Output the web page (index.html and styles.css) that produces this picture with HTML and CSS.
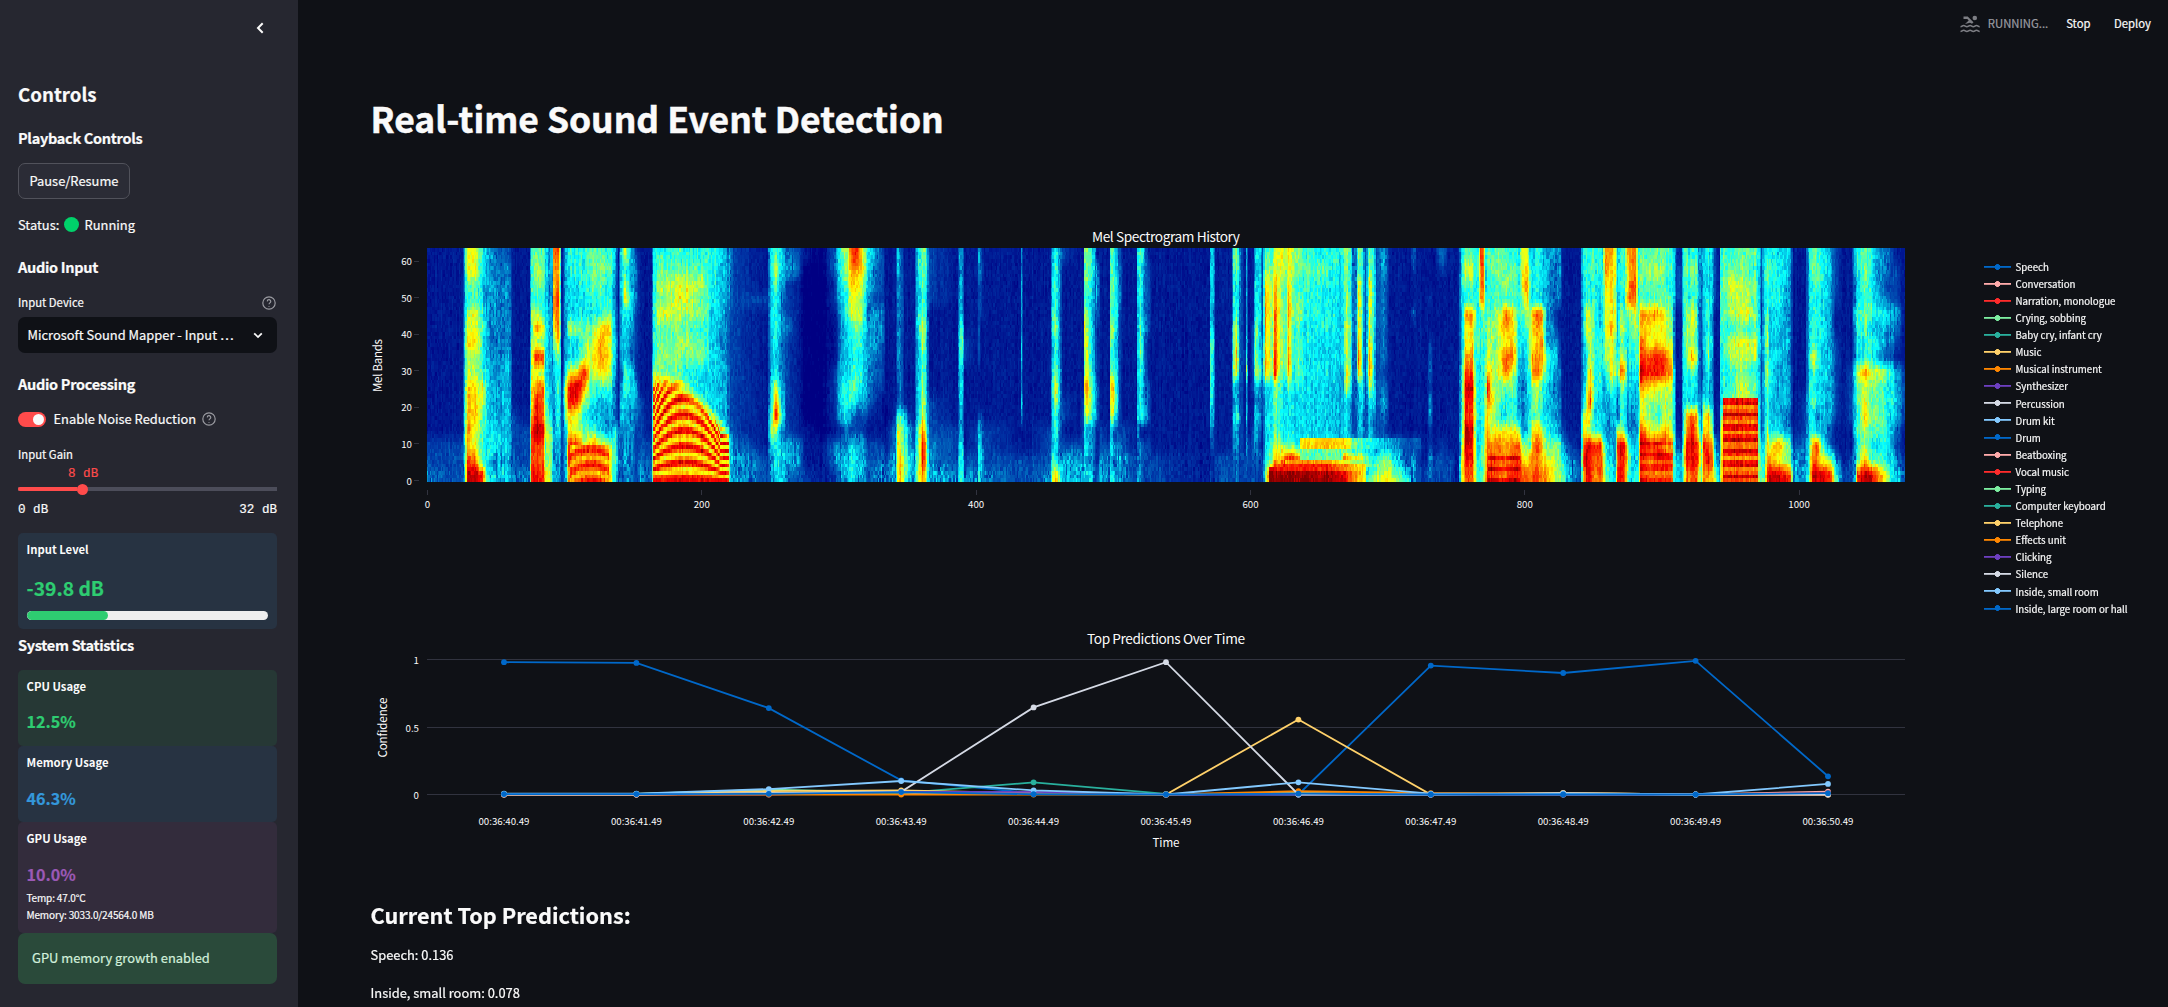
FILE: index.html
```html
<!DOCTYPE html>
<html lang="en">
<head>
<meta charset="utf-8">
<title>Real-time Sound Event Detection</title>
<link rel="stylesheet" href="styles.css">
</head>
<body>
<div class="app">
  <aside class="sidebar">
    <header class="sidebar-head">
      <svg class="collapse" viewBox="0 0 8 12"><path d="M6.7 1.3 2 6l4.7 4.7"/></svg>
    </header>
    <h2 class="side-title">Controls</h2>
    <h3 class="side-heading">Playback Controls</h3>
    <button class="btn">Pause/Resume</button>
    <p class="status">Status: <span class="dot"></span> Running</p>
    <h3 class="side-heading audio-input">Audio Input</h3>
    <div class="field-label"><span>Input Device</span>
      <svg class="help" viewBox="0 0 24 24"><circle cx="12" cy="12" r="10.6"/><path d="M9 9.2a3 3 0 0 1 6 .3c0 2-3 2.600-3 4.500"/><path d="M12 17v1.400"/></svg>
    </div>
    <div class="select"><span>Microsoft Sound Mapper - Input …</span>
      <svg viewBox="0 0 10 7"><path d="M1.200 1.300 5 5.100l3.800-3.800"/></svg>
    </div>
    <h3 class="side-heading audio-proc">Audio Processing</h3>
    <div class="toggle-row"><span class="toggle"><span class="knob"></span></span><span class="toggle-text">Enable Noise Reduction</span>
      <svg class="help" viewBox="0 0 24 24"><circle cx="12" cy="12" r="10.6"/><path d="M9 9.2a3 3 0 0 1 6 .3c0 2-3 2.600-3 4.500"/><path d="M12 17v1.400"/></svg>
    </div>
    <div class="field-label gain-label"><span>Input Gain</span></div>
    <div class="gain-value">8 dB</div>
    <div class="slider"><span class="slider-fill"></span><span class="slider-thumb"></span></div>
    <div class="slider-range"><span>0 dB</span><span>32 dB</span></div>
    <section class="card level">
      <h4>Input Level</h4>
      <div class="big">-39.8 dB</div>
      <div class="meter"><div class="meter-fill" style="width:33.7%"></div></div>
    </section>
    <h3 class="side-heading stats">System Statistics</h3>
    <section class="card cpu"><h4>CPU Usage</h4><div class="value">12.5%</div></section>
    <section class="card memory"><h4>Memory Usage</h4><div class="value">46.3%</div></section>
    <section class="card gpu"><h4>GPU Usage</h4><div class="value">10.0%</div>
      <p>Temp: 47.0°C</p><p>Memory: 3033.0/24564.0 MB</p></section>
    <div class="success">GPU memory growth enabled</div>
  </aside>
  <main class="main">
    <header class="topbar">
      <svg class="swimmer" viewBox="0 0 20 18"><circle cx="14.800" cy="3" r="2.300"/><path d="M3.500 1.600h4.200l5.800 5.600-1.500 1.500-2-.9-5 1.300 3.700-3.600-1.400-1.600H3.500z"/><path class="wave" d="M.5 11.700c1.600 0 1.600-1.200 3.200-1.200s1.600 1.200 3.200 1.200 1.600-1.200 3.200-1.200 1.600 1.200 3.200 1.200 1.600-1.200 3.200-1.200 1.600 1.200 3.200 1.200M.5 16.500c1.600 0 1.600-1.200 3.200-1.200s1.600 1.200 3.200 1.200 1.600-1.200 3.200-1.200 1.600 1.200 3.200 1.200 1.600-1.200 3.200-1.200 1.600 1.200 3.200 1.200"/></svg>
      <span class="running">RUNNING...</span>
      <span class="stop">Stop</span>
      <span class="deploy">Deploy</span>
    </header>
    <h1>Real-time Sound Event Detection</h1>
    <div class="figure">
      <div class="plots">
        <svg class="axes" width="1560" height="670" viewBox="370 190 1560 670">
          <g class="ticks" id="ticks"></g>
          <g class="axis-text" id="axis-text"></g>
          <text class="plot-title" x="1166" y="242" textLength="148">Mel Spectrogram History</text>
          <text class="plot-title" x="1166" y="643.500" textLength="158">Top Predictions Over Time</text>
          <text class="axis-title" transform="translate(382 365.500) rotate(-90)" textLength="53">Mel Bands</text>
          <text class="axis-title" transform="translate(387 727.500) rotate(-90)" textLength="60">Confidence</text>
          <text class="axis-title" x="1166" y="847" textLength="27">Time</text>
          <g id="traces"></g>
        </svg>
        <canvas class="spectrogram" id="spectrogram" width="1078" height="64"></canvas>
      </div>
      <ul class="legend">
        <li class="c0"><span>Speech</span></li>
        <li class="c1"><span>Conversation</span></li>
        <li class="c2"><span>Narration, monologue</span></li>
        <li class="c3"><span>Crying, sobbing</span></li>
        <li class="c4"><span>Baby cry, infant cry</span></li>
        <li class="c5"><span>Music</span></li>
        <li class="c6"><span>Musical instrument</span></li>
        <li class="c7"><span>Synthesizer</span></li>
        <li class="c8"><span>Percussion</span></li>
        <li class="c9"><span>Drum kit</span></li>
        <li class="c0"><span>Drum</span></li>
        <li class="c1"><span>Beatboxing</span></li>
        <li class="c2"><span>Vocal music</span></li>
        <li class="c3"><span>Typing</span></li>
        <li class="c4"><span>Computer keyboard</span></li>
        <li class="c5"><span>Telephone</span></li>
        <li class="c6"><span>Effects unit</span></li>
        <li class="c7"><span>Clicking</span></li>
        <li class="c8"><span>Silence</span></li>
        <li class="c9"><span>Inside, small room</span></li>
        <li class="c0"><span>Inside, large room or hall</span></li>
      </ul>
    </div>
    <h2 class="pred-title">Current Top Predictions:</h2>
    <p class="pred">Speech: 0.136</p>
    <p class="pred">Inside, small room: 0.078</p>
  </main>
</div>
<script src="charts.js"></script>
</body>
</html>
```
FILE: styles.css
```css
* { box-sizing: border-box; }
body {
  margin: 0;
  background: #0f1116;
  color: #fafafa;
  font-family: "Noto Sans CJK SC", "Noto Sans", sans-serif;
  font-size: 12.9px;
  line-height: 20px;
  -webkit-text-stroke: .2px;
}
h1, h2, h3, h4, p, ul { margin: 0; padding: 0; }
.app { display: flex; width: 2168px; height: 1007px; overflow: hidden; }

/* Sidebar */
.sidebar {
  width: 298px;
  flex: none;
  background: #262730;
  padding: 0 21px 0 18px;
  display: flex;
  flex-direction: column;
}
.sidebar > * { flex: none; }
.sidebar-head { height: 81px; padding: 22px 13px 0 0; display: flex; justify-content: flex-end; }
.collapse { width: 8px; height: 12px; fill: none; stroke: #fafafa; stroke-width: 2; }
.side-title { font-size: 18.700px; line-height: 26px; height: 26px; font-weight: 700; }
.side-heading { font-size: 14.500px; line-height: 20px; height: 20px; font-weight: 700; margin-top: 21px; letter-spacing: -.3px; }
.btn {
  align-self: flex-start;
  width: 112px;
  height: 36px;
  margin-top: 15px;
  padding: 0;
  border: 1px solid #51525b;
  border-radius: 7px;
  background: #2b2c36;
  color: #fafafa;
  font: inherit;
}
.status { margin-top: 16px; height: 20px; display: flex; align-items: center; white-space: pre; }
.dot { width: 15px; height: 15px; border-radius: 50%; background: #00d26a; margin: 0 2.500px 1px 2px; }
.audio-input { margin-top: 22px; }
.field-label { margin-top: 17px; height: 16px; line-height: 18px; font-size: 11.300px; display: flex; justify-content: space-between; align-items: center; }
.help { width: 14px; height: 14px; fill: none; stroke: #9b9ca2; stroke-width: 2; }
.field-label .help { margin: 2px 1px 0 0; }
.select {
  margin-top: 7px;
  height: 36px;
  border-radius: 7px;
  background: #0f1116;
  padding: 0 14px 0 9.500px;
  display: flex;
  align-items: center;
  justify-content: space-between;
}
.select svg { width: 10px; height: 7px; fill: none; stroke: #fafafa; stroke-width: 1.800; }
.toggle-row { margin-top: 15px; height: 20px; display: flex; align-items: center; }
.toggle { width: 28px; height: 15px; border-radius: 8px; background: #ff4b4b; padding: 2px; display: flex; justify-content: flex-end; }
.knob { width: 11px; height: 11px; border-radius: 50%; background: #fafafa; }
.toggle-text { margin: 0 6px 0 7.500px; }
.gain-value, .slider-range { font: 12.600px/16px "Liberation Mono", monospace; }
.gain-value { margin: 4px 0 0 50px; color: #ff4b4b; height: 16px; }
.slider { margin-top: 1px; height: 12px; display: flex; align-items: center; background: linear-gradient(#4c4d5a, #4c4d5a) center / 100% 4px no-repeat; }
.slider-fill { width: 59px; height: 4px; border-radius: 2px 0 0 2px; background: #ff4b4b; }
.slider-thumb { width: 11px; height: 11px; border-radius: 50%; background: #ff4b4b; }
.slider-range { margin-top: 7px; height: 16px; display: flex; justify-content: space-between; }
.card { border-radius: 5px; padding: 7px 9px 0 8.500px; }
.card h4 { font-size: 11.300px; line-height: 18px; height: 18px; font-weight: 700; -webkit-text-stroke: 0; }
.level { height: 96px; margin-top: 15px; background: #273342; }
.big { margin-top: 15px; height: 30px; line-height: 30px; font-size: 19.300px; font-weight: 700; color: #2ecc71; }
.meter { margin-top: 8px; height: 9px; border-radius: 5px; background: #eee; overflow: hidden; }
.meter-fill { height: 9px; border-radius: 5px; background: #2ecc71; }
.stats { margin-top: 6px; margin-bottom: 15px; }
.value { margin-top: 15px; height: 24px; line-height: 24px; font-size: 16.100px; font-weight: 700; }
.cpu { height: 76px; background: #263835; }
.cpu .value { color: #2ecc71; margin-top: 14px; }
.memory { height: 76px; background: #273342; }
.memory .value { color: #3498db; }
.gpu { height: 111px; background: #332c3c; }
.gpu .value { color: #9b59b6; margin-bottom: 3px; }
.gpu p { font-size: 10px; line-height: 17px; height: 17px; letter-spacing: -.15px; }
.success { height: 51px; border-radius: 7px; background: #2a4a3a; padding: 0 14px; line-height: 50px; color: #d2f0dc; }

/* Main column */
.main { width: 1870px; padding-left: 72.500px; }
.topbar { height: 48px; padding-right: 17px; display: flex; align-items: center; justify-content: flex-end; font-size: 11.300px; }
.swimmer { width: 20px; height: 18px; fill: #7d7e84; }
.swimmer .wave { fill: none; stroke: #7d7e84; stroke-width: 1.500; }
.topbar span { line-height: 18px; margin-bottom: 2px; }
.topbar .running { color: #9a9ba1; margin: 0 18px 2px 8px; }
.topbar .stop { margin-right: 23.500px; }
h1 { margin-top: 46px; height: 48px; line-height: 48px; font-size: 35.400px; font-weight: 700; white-space: nowrap; -webkit-text-stroke: .5px; }
.figure { margin: 48px 0 0 -.5px; height: 670px; display: flex; }
.plots { width: 1560px; height: 670px; display: grid; }
.axes, .spectrogram { grid-area: 1 / 1; }
.spectrogram { width: 1478px; height: 234px; margin: 58px 0 0 57px; image-rendering: pixelated; }
.axes text { fill: #fafafa; text-anchor: middle; }
.axes .plot-title { font-size: 13.700px; }
.axes .axis-title { font-size: 11.600px; }
.axes .axis-text text { font-size: 9.700px; }
.axes .axis-text .end { text-anchor: end; }
.ticks line { stroke: #31333f; stroke-width: 1; }
.legend { list-style: none; margin: 68px 0 0 54px; font-size: 9.700px; color: #fafafa; }
.legend li { height: 17.100px; line-height: 17px; display: flex; align-items: center; white-space: nowrap; }
.legend span { padding-top: 1.500px; }
.legend li::before {
  content: "";
  width: 27px;
  height: 6px;
  margin-right: 4.500px;
  background:
    radial-gradient(circle at 50% 50%, currentColor 2.600px, transparent 3.100px),
    linear-gradient(currentColor, currentColor) center / 100% 1.800px no-repeat;
  color: var(--c);
}
.c0 { --c: #0068c9; }
.c1 { --c: #ffabab; }
.c2 { --c: #ff2b2b; }
.c3 { --c: #7defa1; }
.c4 { --c: #29b09d; }
.c5 { --c: #ffd16a; }
.c6 { --c: #ff8700; }
.c7 { --c: #6d3fc0; }
.c8 { --c: #d5dae5; }
.c9 { --c: #83c9ff; }
#traces { stroke: none; }
#traces polyline { fill: none; stroke: var(--c); stroke-width: 1.800; }
#traces circle { fill: var(--c); }
.pred-title { margin-top: 38px; height: 34px; line-height: 33px; font-size: 21.700px; font-weight: 700; }
.pred { margin-top: 13px; height: 20px; }
.pred + .pred { margin-top: 18px; }
```
FILE: charts.js
```js
const NS = 'http://www.w3.org/2000/svg';
function add(parent, tag, attrs, text) {
  const el = document.createElementNS(NS, tag);
  for (const k in attrs) el.setAttribute(k, attrs[k]);
  if (text !== undefined) el.textContent = text;
  parent.appendChild(el);
  return el;
}
const ticks = document.getElementById('ticks');
const labels = document.getElementById('axis-text');
const traces = document.getElementById('traces');

// Spectrogram axes
for (let b = 0; b <= 60; b += 10) {
  const y = 480.5 - b * 3.656;
  add(ticks, 'line', { x1: 414, x2: 419, y1: Math.floor(y) + .5, y2: Math.floor(y) + .5 });
  add(labels, 'text', { x: 412, y: y + 4, class: 'end' }, b);
}
for (let c = 0; c <= 1000; c += 200) {
  const x = 427.5 + c * 1.3716;
  add(ticks, 'line', { x1: Math.floor(x) + .5, x2: Math.floor(x) + .5, y1: 490, y2: 495 });
  add(labels, 'text', { x: x, y: 508 }, c);
}

// Prediction lines
[[1, 659.5], [0.5, 727.5], [0, 794.5]].forEach(([v, y]) => {
  add(ticks, 'line', { x1: 427, x2: 1905, y1: y, y2: y });
  add(labels, 'text', { x: 419, y: y + 4, class: 'end' }, v);
});
const X = i => 504 + 132.4 * i;
for (let i = 0; i <= 10; i++) {
  add(labels, 'text', { x: X(i), y: 825, textLength: 51 }, '00:36:' + (40 + i) + '.49');
}
const series = [
  [0, [.98, .975, .64, .105, .01, 0, 0, .955, .9, .99, .135]],
  [1, [0, 0, .01, .01, .01, 0, .01, 0, .01, 0, .022]],
  [2, [0, 0, .01, .02, .01, 0, .01, 0, 0, 0, .01]],
  [3, [.005, .005, .035, .015, .01, 0, .01, 0, .01, 0, 0]],
  [4, [0, 0, .01, .01, .09, .005, 0, 0, 0, 0, 0]],
  [5, [.005, .005, .025, .03, .01, 0, .555, 0, 0, 0, 0]],
  [7, [0, 0, 0, .02, .02, 0, 0, 0, 0, 0, 0]],
  [6, [0, 0, 0, 0, 0, 0, .025, .01, .01, 0, 0]],
  [8, [0, 0, .01, .02, .645, .98, 0, 0, .01, 0, 0]],
  [9, [.006, .006, .04, .1, .03, 0, .09, .006, .006, 0, .078]],
  [0, [.003, .003, .005, .018, .002, 0, .006, 0, 0, 0, .01]]
];
for (const [c, values] of series) {
  const g = add(traces, 'g', { class: 'c' + c });
  const Y = v => 794.5 - v * 135;
  add(g, 'polyline', { points: values.map((v, i) => X(i) + ',' + Y(v)).join(' ') });
  values.forEach((v, i) => add(g, 'circle', { cx: X(i), cy: Y(v), r: 2.9 }));
}

// Spectrogram frames: [frame, energy per 4-band group from the top band down, hex]
const frames = `0 1111111111111223
25 1111111111111222
27 4433444444555554
29 997689a88aaabace
34 997699a88aaa99ce
38 776677877899877d
40 665567666a97777d
43 4433444455555556
46 3344333344445645
60 2333333444444444
62 1111111111122223
74 1111111111112223
76 777687898aabdccd
79 78868b8d9bddedcd
84 78767a7d8ccceccd
86 5554566556679779
89 3433444445567889
91 5433444444456665
92 cbabba8654444444
95 cbbccba766665444
97 7666676655544433
98 1111111112222222
101 4444444469974444
103 665558559dda9ddb
109 66555855aed99ddc
114 66655778db8679cb
120 7776578986647bdd
126 78766abba64459cd
132 67667b9a975448bb
135 6655667765444777
137 4433445543336776
139 1111111111113333
142 7665655534553333
144 968a655477544443
149 4445443355434333
152 2333222224432222
155 1111111111222233
163 1111111111111223
165 66666666889bbccb
169 678797788abccccc
175 678897787abbbbbb
187 67998787679aaaab
200 678786785567aaab
207 6666565555568aab
212 65555445545569bb
218 44443333444448ba
221 3333222222223555
223 2222222222222344
248 1112111111111122
250 5544544434568533
254 7976666569bd8665
258 5543343334573455
262 3422232222222443
271 2211111111111332
275 1000000000001112
288 0000000000000111
298 3322111122221332
301 6654433345541343
306 8876655556653344
309 cba9966567632566
313 dba9987677522454
317 9a87865555422444
321 6654344444321232
325 4332444332211223
332 2222333222111233
334 1111111111101123
341 1111111111123344
343 4433333332268999
345 33334333333799bb
348 1111111111146677
351 1111111111124465
355 1111111111112233
358 6655665555567889
361 777679877889bddb
363 7766676666779bb9
366 2222111111222334
386 1111111111112223
388 4344456655534566
390 4344477655434566
392 1111112211111123
401 1111111111112223
402 3322222211124555
404 2322211111124565
406 1111111111112223
432 1111111111111122
433 3344434433531122
435 1111111111111122
454 1111111111112223
456 5566775567665579
458 666668667986655a
461 4444344455543338
463 2111111111221244
475 1111111111111244
478 1111111111222234
479 777689877a865555
481 877678989ba84545
484 6665565567874435
487 3323222234442222
488 1444322223331112
491 1111111111112234
497 1111111111111233
498 6667787679974546
500 777768667ba83435
502 5566665566752334
505 2333222222222343
508 1111111111112233
517 1111111111111122
518 6655555555553334
520 7666677766661333
523 4333343333461222
526 1222221112221222
529 1111111111111122
570 1111111111111111
571 4444456676643212
573 4545346555442211
575 1111111111111122
586 1111111111111122
588 7655577785354322
590 876679aba4574433
592 4544334432242222
594 2222222222222222
596 1111111211111122
597 4444445694463432
599 1111111111111222
602 1111122222112222
604 5466678895464422
607 6555655684343232
609 2222223333221122
611 78abbbabb5555567
616 677877777555567f
618 99bbcccdd88779bf
622 99888888766668af
626 88777777755557df
628 a9abbaabb75557de
631 88778666655557de
635 87678777765555ce
640 67666565555556cd
651 67666655655556de
668 65555555444444cc
670 88788998a95555bb
673 76676877865445ba
675 33333333332224aa
677 33333333333224aa
679 87aaaabcb54445aa
682 66666666665444a9
684 2222222222222488
687 779999abb8544566
690 6666666666533466
692 2222222222222267
698 4433333323432488
702 1111111111111378
706 1111111111111357
717 1111111111111222
719 3211311111111244
721 1111111111111222
729 1111111111111112
731 1112112332442243
734 1111111111111122
740 3211111111111222
745 1111111111111122
752 1111111111111111
754 5555444455556789
757 7976b99bceddeedc
762 7976baabcedceddc
764 6666876778898999
766 6766568666665567
768 cbbb666655555556
770 cccb876666666777
772 656677778889aaab
773 76667889adbabccd
776 6766678799a88bdd
779 787798788888acdd
783 77768a9a97659bcc
786 7787cb9cc765abcc
791 6776aaac97669bdd
796 6666666554448cdd
799 99a87655433348ac
802 9aba87655444489c
804 57778888766677bb
806 5555ba9bb8779bbc
810 6665cbabc877acbc
813 5554babb96658aab
816 444444476545679b
822 4333234543445899
826 3333112232333778
828 1111111111112357
833 1111111111111234
841 1111111111111122
843 665555444458abda
845 66669975678a9ded
848 67669999bbd98ede
851 6666666666556ccb
855 6655556666556dcc
857 55555555444449bb
859 bba9998864443677
863 baaa9b9997444456
866 9988897786543334
868 5555555674339dcd
870 66668979c7668edd
873 66657768b7656dcc
875 b99b765554434898
878 bbcc876655433555
881 bbcb987654433445
883 6666777765555666
885 7776bacceb99cedd
891 7877ba9cda889dcc
898 7877b9add9869ddc
903 7777999cc989bcdc
908 66566789b8778bcb
909 4444333355555666
911 2222111111111355
914 1222111111111244
916 6666566655556777
918 67667777655aaddb
922 6876998b755cdedc
925 67767779655bbddc
927 4444333433478cc9
929 4333222222334677
931 555555544469adcb
934 66567678655baceb
937 4444334333467bca
939 2222111111111458
942 1111111111111235
943 6667666555557788
945 777676666669cccc
950 67988698667ccccc
960 77889798799dcccc
968 76878698677ccccc
971 5555556555566788
973 2222113222222466
975 5655556555445567
977 6876779798778abd
979 67665556665569be
985 5666554544445b9e
991 554444544443488d
994 433333323332377c
996 1111111111111244
1005 1111111111222333
1008 6555555656655777
1010 7766666966756abe
1013 7776666865635dce
1016 666566555554489e
1021 555544445444338d
1024 343333343443227c
1027 2222112222221146
1032 1111111111111112
1038 1111111122221122
1041 5433533365545344
1043 665576659776767d
1048 77767766b89a88ae
1053 666675669878767e
1058 434464549777757b
1064 3323543286666659
1068 2222433265654455
1071 1222432144543234
1077 1111111122221123`.split('\n').map(l => {
  const [f, p] = l.split(' ');
  return [+f, [...p].map(h => parseInt(h, 16) / 15)];
});

// Plotly "Jet" colour scale
const jet = [[0, 0, 0, 131], [.125, 0, 60, 170], [.375, 5, 255, 255], [.625, 255, 255, 0], [.875, 250, 0, 0], [1, 128, 0, 0]];
function colour(v) {
  v = Math.max(0, Math.min(1, v));
  let i = 1;
  while (v > jet[i][0]) i++;
  const a = jet[i - 1], b = jet[i], t = (v - a[0]) / (b[0] - a[0]);
  return [1, 2, 3].map(k => a[k] + (b[k] - a[k]) * t);
}
let seed = 7;
const rand = () => (seed = (seed * 1664525 + 1013904223) >>> 0) / 4294967296;

const W = 1078, H = 64;
const ctx = document.getElementById('spectrogram').getContext('2d');
const img = ctx.createImageData(W, H);
let k = 0;
for (let x = 0; x < W; x++) {
  while (k < frames.length - 2 && x >= frames[k + 1][0]) k++;
  const [f0, p0] = frames[k], [f1, p1] = frames[k + 1];
  const t = Math.min(1, (x - f0) / (f1 - f0));
  const colNoise = (rand() - .5) * .05;
  let drift = 0;
  for (let y = 0; y < H; y++) {
    const r = Math.max(0, Math.min(14.999, (y + .5) / 4 - .5));
    const i = Math.floor(r), u = r - i;
    const at = p => p[i] + (p[i + 1] - p[i]) * u;
    let v = at(p0) * (1 - t) + at(p1) * t;
    const band = 63 - y;
    // rising and falling voice harmonics
    if (x >= 165 && x <= 219) {
      const s = (x - 187) / 38, shape = Math.max(.45, 1 - 1.1 * s * s);
      const top = x < 182 ? 29 : x < 200 ? 29 - (x - 182) * .3 : 23.6 - (x - 200) * .45;
      const ripple = Math.cos(2 * Math.PI * (band / shape - .4) / 4.4);
      const weight = Math.max(0, Math.min(1, (top - band) / 5));
      v = v * (1 - weight) + (.76 + .14 * ripple) * weight;
    }
    if (x >= 104 && x <= 132 && band < 10) {
      const s = (x - 119) / 16;
      v = .77 + .09 * Math.cos(2 * Math.PI * (band + s * s * 2.4) / 4.2);
    }
    // steady harmonics
    if (x >= 945 && x <= 970 && band < 23) v = .83 + .1 * Math.cos(2 * Math.PI * (band - 1) / 3.4);
    if (x >= 774 && x <= 796 && band < 9) v += .07 * Math.cos(2 * Math.PI * band / 3);
    if (x >= 885 && x <= 908 && band < 12) v += .06 * Math.cos(2 * Math.PI * band / 3.4);
    // low hum with its overtone
    if (x >= 637 && x < 725 && band >= 9 && band < 12) v = x < 674 ? .7 - Math.abs(x - 654) * .004 : Math.max(.16, .5 - (x - 674) * .009);
    if (x >= 614 && x < 685 && band < 3) v = x < 670 ? .98 - Math.max(0, x - 655) * .006 - (band === 2 ? .02 : 0) : .85 - (x - 670) * .018;
    if (x >= 626 && x < 685 && band >= 3 && band < 6) v = (band === 5 ? .72 : .85) - Math.max(0, x - 655) * .008;
    if (x >= 614 && x < 626 && band === 3) v = .88;
    if (x >= 637 && x < 668 && (band === 6 || band === 7 || band === 8)) v = .47;
    if (x >= 685 && x < 718 && band < 4) v = Math.max(.25, .66 - Math.abs(x - 699) * .016 - band * .04);
    drift = drift * .6 + (rand() - .5) * .05;
    if (v < .12) v -= .014;
    const mid = v > .18 && v < .6 ? 1.2 : v >= .6 ? .8 : .5;
    const low = band < 8 && v < .35 ? 1.35 : 1;
    v += (colNoise + drift + (rand() - .5) * .09) * mid * low;
    const o = (y * W + x) * 4, c = colour(v);
    img.data[o] = c[0];
    img.data[o + 1] = c[1];
    img.data[o + 2] = c[2];
    img.data[o + 3] = 255;
  }
}
ctx.putImageData(img, 0, 0);
```
